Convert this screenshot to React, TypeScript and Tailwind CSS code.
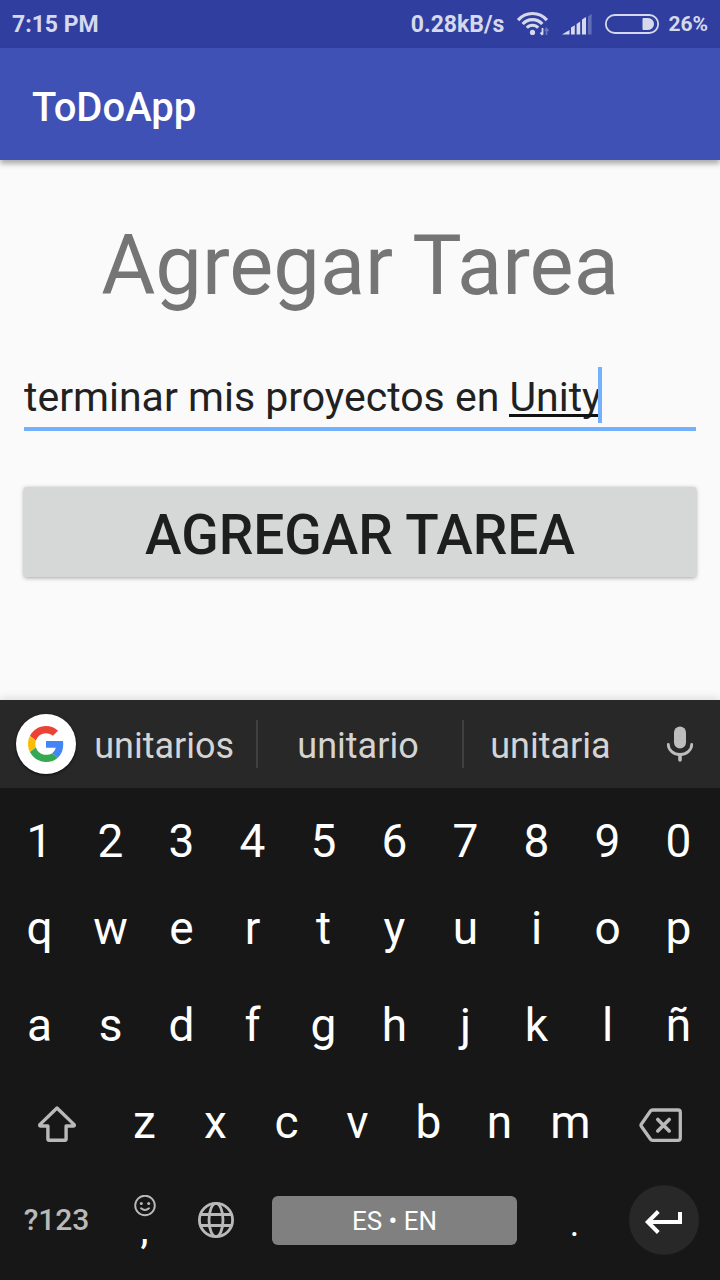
import { useState } from "react";
import type { ReactNode } from "react";

function StatusBar() {
  return (
    <div className="flex h-12 items-center bg-[#303f9f] px-3 text-[23px] leading-none font-bold text-[#d6d9ec]">
      <span className="grow">7:15 PM</span>
      <span>0.28kB/s</span>
      <svg className="ml-3 h-[26px] w-[34px]" viewBox="0 0 34 26" fill="none" stroke="#d6d9ec" aria-hidden="true">
        <path d="M2.1 9.1A19 19 0 0 1 30.9 9.1" strokeWidth="3.2" />
        <path d="M6.7 13A13 13 0 0 1 26.3 13" strokeWidth="3.2" />
        <path d="M10.8 16.8A7.5 7.5 0 0 1 22.2 16.8" strokeWidth="3" />
        <circle cx="16.5" cy="21.4" r="2.6" fill="#d6d9ec" stroke="none" />
        <path d="M26.5 17v6.5M24.500 21.500l2 2.500" strokeWidth="1.8" />
        <path d="M30.5 24v-6.500M29 20l1.500-2.500 2 2.500" strokeWidth="1.600" opacity="0.35" />
      </svg>
      <svg className="ml-3 h-6 w-[30px]" viewBox="0 0 30 24" fill="#d6d9ec" aria-hidden="true">
        <path d="M0 22.5L7.5 18v4.5zM9 15.6l3.8-2.3v9.2H9zM14.6 12l3.6-2.4v12.9h-3.6zM20 7.6l4-2.6v17.5h-4z" />
        <path d="M26 4.5L29.6 2v20.5H26z" opacity="0.3" />
      </svg>
      <svg className="ml-3 h-[22px] w-[56px]" viewBox="0 0 56 22" fill="none" aria-hidden="true">
        <rect x="1.8" y="2" width="52.400" height="18" rx="9" stroke="#d6d9ec" strokeWidth="1.8" />
        <path d="M39.5 5H44a6 6 0 0 1 0 12h-4.500a1 1 0 0 1-1-1V6a1 1 0 0 1 1-1z" fill="#d6d9ec" />
      </svg>
      <span className="ml-2 text-[21px]">26%</span>
    </div>
  );
}

function GoogleLogo() {
  return (
    <svg className="size-9" viewBox="0 0 48 48" aria-hidden="true">
      <path fill="#EA4335" d="M24 9.500c3.540 0 6.710 1.220 9.210 3.600l6.850-6.850C35.900 2.380 30.470 0 24 0 14.620 0 6.510 5.380 2.560 13.220l7.980 6.190C12.430 13.720 17.740 9.500 24 9.500z" />
      <path fill="#4285F4" d="M46.980 24.550c0-1.570-.15-3.090-.38-4.550H24v9.020h12.940c-.58 2.960-2.260 5.480-4.780 7.180l7.730 6c4.510-4.180 7.090-10.360 7.090-17.650z" />
      <path fill="#FBBC05" d="M10.530 28.590c-.48-1.450-.76-2.990-.76-4.590s.27-3.140.76-4.590l-7.980-6.190C.92 16.460 0 20.120 0 24c0 3.880.92 7.540 2.560 10.780l7.970-6.190z" />
      <path fill="#34A853" d="M24 48c6.480 0 11.930-2.130 15.890-5.810l-7.730-6c-2.150 1.450-4.920 2.300-8.160 2.300-6.260 0-11.570-4.220-13.470-9.910l-7.980 6.190C6.510 42.620 14.620 48 24 48z" />
    </svg>
  );
}

function Key({ children, label, className = "" }: { children: ReactNode; label?: string; className?: string }) {
  return (
    <button type="button" aria-label={label} className={`flex items-center justify-center ${className}`}>
      {children}
    </button>
  );
}

function KeyRow({ keys, className }: { keys: string; className: string }) {
  return (
    <div className={`grid grid-cols-10 pr-0.5 ${className}`}>
      {keys.split("").map((k) => (
        <Key key={k} className="pb-1">
          {k}
        </Key>
      ))}
    </div>
  );
}

function Suggestion({ children }: { children: string }) {
  return (
    <button type="button" className="flex h-12 items-center justify-center pt-1 pr-1 text-[36px] leading-none text-[#d4d4d4]">
      {children}
    </button>
  );
}

function Keyboard() {
  return (
    <section aria-label="Teclado" className="bg-[#171717] pb-3 text-white shadow-[0_-2px_8px_rgba(0,0,0,0.12)]">
      <div className="grid h-[88px] grid-cols-[76px_179fr_2px_202fr_2px_176fr_79px] items-center bg-[#282828]">
        <button type="button" aria-label="Google" className="ml-4 flex size-[60px] items-center justify-center rounded-full bg-white shadow-sm shadow-black/60">
          <GoogleLogo />
        </button>
        <Suggestion>unitarios</Suggestion>
        <span className="h-12 bg-[#404040]" />
        <Suggestion>unitario</Suggestion>
        <span className="h-12 bg-[#404040]" />
        <Suggestion>unitaria</Suggestion>
        <button type="button" aria-label="Dictar" className="flex justify-center">
          <svg className="h-9 w-7" viewBox="0 0 28 36" fill="none" stroke="#bdbdbd" strokeWidth="2.800" strokeLinecap="round" aria-hidden="true">
            <rect x="8" y="0.500" width="12" height="22" rx="6" fill="#bdbdbd" stroke="none" />
            <path d="M2.300 18.500a11.700 10 0 0 0 23.400 0" />
            <path d="M14 29v5" strokeWidth="3.600" />
          </svg>
        </button>
      </div>
      <div className="px-1 pt-4 text-[46px] leading-none">
        <KeyRow keys="1234567890" className="h-[78px]" />
        <KeyRow keys="qwertyuiop" className="h-24" />
        <KeyRow keys="asdfghjklñ" className="h-[97px]" />
        <div className="grid h-[97px] grid-cols-[105fr_repeat(7,71fr)_110fr]">
          <Key label="Mayúsculas">
            <svg className="size-10" viewBox="0 0 40 40" fill="none" stroke="#b9b9b9" strokeWidth="3.400" strokeLinejoin="round" aria-hidden="true">
              <path d="M20 4L2.800 20.600q-.5 1.400 1 1.400H10.900V35q0 1.300 1.300 1.300H27.800q1.300 0 1.300-1.300V22H36.200q1.500 0 1-1.400z" />
            </svg>
          </Key>
          {"zxcvbnm".split("").map((k) => (
            <Key key={k} className="pb-1">
              {k}
            </Key>
          ))}
          <Key label="Borrar">
            <svg className="h-9 w-11" viewBox="0 0 44 36" fill="none" stroke="#b9b9b9" strokeWidth="3.300" strokeLinejoin="round" strokeLinecap="round" aria-hidden="true">
              <path d="M13.500 4H39q2.300 0 2.300 2.300V32q0 2.300-2.300 2.300H13.500q-1.300 0-2-1L2.300 20.200q-.6-1 0-2L11.500 5q.7-1 2-1z" />
              <path d="M18.800 13.500l11.400 11.400M30.200 13.500l-11.400 11.400" strokeWidth="3.600" />
            </svg>
          </Key>
        </div>
        <div className="grid h-24 grid-cols-[105fr_71fr_71fr_288fr_71fr_106fr]">
          <Key className="text-[30px] font-medium text-[#b9b9b9]">?123</Key>
          <Key className="flex-col">
            <svg className="size-[22px]" viewBox="0 0 22 22" fill="none" stroke="#b9b9b9" strokeWidth="1.900" strokeLinecap="round" aria-hidden="true">
              <circle cx="11" cy="10.500" r="9.800" />
              <circle cx="7.300" cy="8.500" r="1.500" fill="#b9b9b9" stroke="none" />
              <circle cx="14.700" cy="8.500" r="1.500" fill="#b9b9b9" stroke="none" />
              <path d="M7 13.300q4 3.400 8 0" />
            </svg>
            <span className="text-[36px] leading-7 font-medium">,</span>
          </Key>
          <Key label="Cambiar idioma">
            <svg className="size-10" viewBox="0 0 40 40" fill="none" stroke="#b9b9b9" strokeWidth="2.800" aria-hidden="true">
              <circle cx="20" cy="20" r="16.600" />
              <ellipse cx="20" cy="20" rx="7" ry="16.600" />
              <path d="M4.500 14.500h31M4.500 25.500h31" />
            </svg>
          </Key>
          <div className="flex items-center pr-[22px] pl-[21px]">
            <button type="button" className="h-[49px] grow rounded-md bg-[#808080] pt-0.5 text-[26px] leading-none">
              ES • EN
            </button>
          </div>
          <Key className="pt-2 text-[36px]">.</Key>
          <Key label="Intro" className="pl-px">
            <span className="flex size-[70px] items-center justify-center rounded-full bg-[#282828]">
              <svg className="h-[30px] w-10" viewBox="0 0 40 30" fill="none" stroke="#fff" strokeWidth="4" aria-hidden="true">
                <path d="M36 7v10H4M14.300 6.500L3.800 17l10.500 10.500" />
              </svg>
            </span>
          </Key>
        </div>
      </div>
    </section>
  );
}

export default function App() {
  const [task, setTask] = useState("terminar mis proyectos en Unity");

  return (
    <div className="flex min-h-screen flex-col bg-[#fafafa] font-[Roboto,sans-serif]">
      <StatusBar />
      <header className="flex h-28 items-center bg-[#3f51b5] px-8 pt-2 shadow-[0_4px_5px_rgba(0,0,0,0.3)]">
        <h1 className="text-[40px] leading-none font-medium text-white">ToDoApp</h1>
      </header>
      <main className="flex grow flex-col px-6 pt-14">
        <h2 className="text-center text-[83px] leading-[100px] text-[#757575]">Agregar Tarea</h2>
        <form className="flex flex-col" onSubmit={(e) => e.preventDefault()}>
          <div className="relative mt-[46px]">
            <input
              type="text"
              aria-label="Tarea"
              value={task}
              onChange={(e) => setTask(e.target.value)}
              className="block h-[69px] w-full border-b-4 border-[#73b1ff] pt-1 text-[41px] text-[#212121] caret-[#73b1ff] outline-none"
            />
            <span className="absolute top-[52px] left-[485px] h-[3px] w-[90px] bg-[#111]" />
            <span className="absolute top-[5px] left-[574px] h-14 w-1 bg-[#73b1ff]" />
          </div>
          <button
            type="submit"
            className="mt-14 h-[90px] rounded-xs bg-[#d6d8d7] pt-1.5 text-[55px] leading-none font-medium text-[#1e1e1e] uppercase shadow-[0_1px_4px_rgba(0,0,0,0.35)]"
          >
            Agregar Tarea
          </button>
        </form>
      </main>
      <Keyboard />
    </div>
  );
}
